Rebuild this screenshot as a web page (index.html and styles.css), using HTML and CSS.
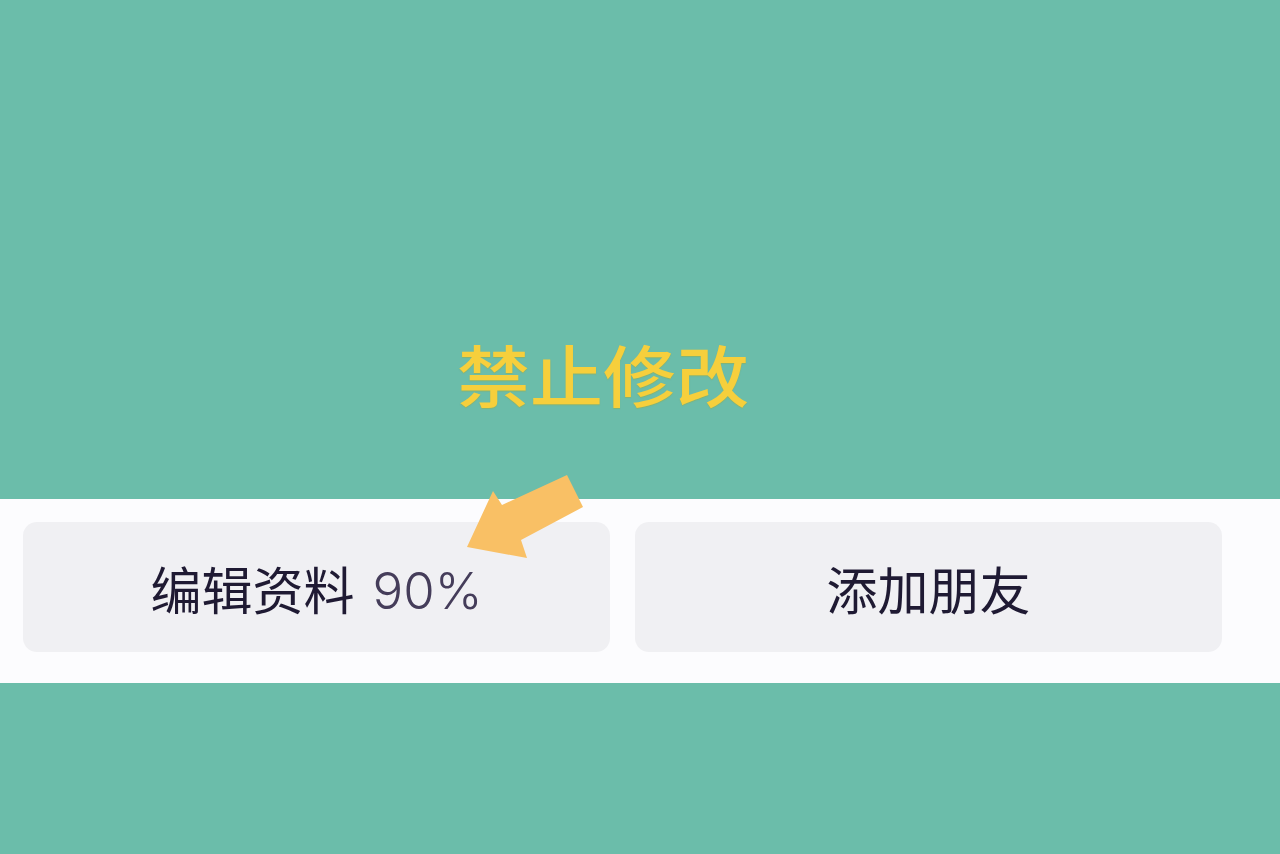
FILE: index.html
```html
<!DOCTYPE html>
<html lang="zh-CN">
<head>
  <meta charset="UTF-8" />
  <title>禁止修改</title>
  <link rel="stylesheet" href="styles.css">
</head>
<body>

  <div class="hero">
    <div class="notice">禁止修改</div>
  </div>

  <div class="actions">
    <div class="btn">编辑资料<span class="progress">90%</span></div>
    <div class="btn">添加朋友</div>
  </div>

  <svg class="arrow" width="1280" height="854" viewBox="0 0 1280 854">
    <polygon points="467,547 493,491 502,505 567,475 583,507 521,540 527,558" fill="#f9c065" />
  </svg>

  <div class="footer"></div>

</body>
</html>
```

FILE: styles.css
```css
html, body {
  margin: 0;
  height: 100%;
}
body {
  position: relative;
  display: flex;
  flex-direction: column;
  height: 854px;
  overflow: hidden;
  background-color: #6bbdaa;
  font-family: "Noto Sans CJK SC", "Liberation Sans", sans-serif;
}
.hero {
  display: flex;
  height: 499px;
  padding: 334px 0 0 457px;
  box-sizing: border-box;
}
.notice {
  font-size: 73px;
  line-height: 84px;
  font-weight: 500;
  color: #f6cf3c;
  text-shadow: 0 1px 1px rgba(160, 170, 60, 0.5);
  transform: scaleY(0.92);
  transform-origin: top left;
}
.actions {
  display: flex;
  gap: 25px;
  height: 184px;
  padding: 23px 58px 31px 23px;
  box-sizing: border-box;
  background-color: #fcfcfe;
}
.btn {
  flex: 1;
  display: flex;
  align-items: center;
  justify-content: center;
  padding-top: 2px;
  border-radius: 14px;
  background-color: #f0f0f3;
  color: #1f1a33;
  font-size: 51px;
  font-weight: 400;
  line-height: 1;
}
.progress {
  margin-left: 18px;
  padding-top: 5px;
  font-family: Inter, "Liberation Sans", sans-serif;
  font-weight: 300;
  font-size: 51px;
  color: #453d5a;
}
.arrow {
  position: absolute;
  top: 0;
  left: 0;
}
.footer {
  flex: 1;
}
```
